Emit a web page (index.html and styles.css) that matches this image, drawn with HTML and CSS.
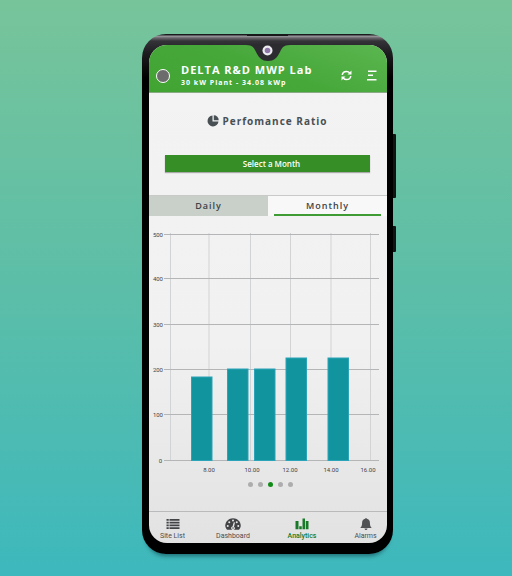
FILE: index.html
```html
<!DOCTYPE html>
<html lang="en">
<head>
<meta charset="utf-8">
<meta name="viewport" content="width=device-width, initial-scale=1">
<title>Analytics</title>
<link rel="stylesheet" href="styles.css">
</head>
<body>
<main class="stage">
  <div class="phone">
    <span class="speaker"></span>
    <span class="side-key volume"></span>
    <span class="side-key power"></span>
    <svg class="notch" viewBox="0 0 44 18" aria-hidden="true">
      <path d="M0 0H44V1C37 1 36 4 34 8C31 14 28 17 22 17S13 14 10 8C8 4 7 1 0 1Z" fill="#2c2b2f"/>
      <circle cx="21.500" cy="6.500" r="5" fill="#ececf0"/>
      <circle cx="21.500" cy="6.500" r="2.800" fill="#8f76a8"/>
    </svg>
    <div class="screen">
      <header class="topbar">
        <span class="status"></span>
        <div class="plant">
          <h1 class="plant-name">DELTA R&amp;D MWP Lab</h1>
          <p class="plant-size">30 kW Plant - 34.08 kWp</p>
        </div>
        <button class="icon-button" type="button" aria-label="Refresh">
          <svg width="11" height="11" viewBox="0 0 22 22" fill="none" stroke="#fff" stroke-width="3">
            <path d="M2.500 10C3 5.500 6.500 2.800 11 2.800C13.800 2.800 16 4 17.500 6"/>
            <path d="M19.500 12C19 16.500 15.500 19.200 11 19.200C8.200 19.200 6 18 4.500 16"/>
            <path d="M21 1V9H13ZM1 21V13H9Z" fill="#fff" stroke="none"/>
          </svg>
        </button>
        <button class="icon-button" type="button" aria-label="Menu">
          <svg width="10" height="11" viewBox="0 0 10 11" fill="#fff">
            <path d="M1 0.500H9.500V2H1ZM1 4.500H6V6H1ZM0 9H9.500V10.500H0Z"/>
          </svg>
        </button>
      </header>

      <section class="intro">
        <h2 class="heading">
          <svg width="12" height="12" viewBox="0 0 24 24" fill="#485054" aria-hidden="true">
            <path d="M11 1V13H23A11 11 0 1 1 11 1Z"/>
            <path d="M13.500 0.500A10 10 0 0 1 23.500 10.500H13.500Z"/>
          </svg>
          Perfomance Ratio
        </h2>
        <button class="select-month" type="button">Select a Month</button>
      </section>

      <div class="tabs" role="tablist">
        <button class="tab" type="button" role="tab" aria-selected="false">Daily</button>
        <button class="tab tab-active" type="button" role="tab" aria-selected="true"><span class="tab-label">Monthly</span></button>
      </div>

      <svg class="chart" viewBox="0 0 238 252" role="img" aria-label="Performance ratio by month">
        <g class="columns">
          <path d="M21.500 8V235M60 8V235M101.500 8V235M141.500 8V235M182 8V235M221.500 8V235"/>
        </g>
        <g class="rows">
          <path d="M15 9.500H230M15 53.500H230M15 99.500H230M15 144.500H230M15 189.500H230M15 235.500H230"/>
        </g>
        <g class="bars">
          <rect x="42.500" y="152" width="20.500" height="83.500"/>
          <rect x="78.500" y="144" width="20.500" height="91.500"/>
          <rect x="105.500" y="144" width="20.500" height="91.500"/>
          <rect x="137" y="133" width="20.500" height="102.500"/>
          <rect x="179" y="133" width="20.500" height="102.500"/>
        </g>
        <g class="values">
          <text x="14" y="12">500</text>
          <text x="14" y="56">400</text>
          <text x="14" y="102">300</text>
          <text x="14" y="147">200</text>
          <text x="14" y="192">100</text>
          <text x="13" y="238">0</text>
        </g>
        <g class="hours">
          <text x="60" y="247">8.00</text>
          <text x="103" y="247">10.00</text>
          <text x="141" y="247">12.00</text>
          <text x="182" y="247">14.00</text>
          <text x="219" y="247">16.00</text>
        </g>
      </svg>

      <div class="dots">
        <span class="dot"></span><span class="dot"></span><span class="dot dot-active"></span><span class="dot"></span><span class="dot"></span>
      </div>

      <nav class="bottom-nav">
        <a class="nav-item" href="#sites">
          <svg width="14" height="12" viewBox="0 0 28 24" fill="#414345" aria-hidden="true">
            <path d="M1 2H5.500V5.500H1ZM7 2H27V5.500H7ZM1 7.500H5.500V11H1ZM7 7.500H27V11H7ZM1 13H5.500V16.500H1ZM7 13H27V16.500H7ZM1 18.500H5.500V22H1ZM7 18.500H27V22H7Z"/>
          </svg>
          Site List
        </a>
        <a class="nav-item" href="#dashboard">
          <svg width="16" height="12" viewBox="0 0 32 24" aria-hidden="true">
            <path d="M4 23.500C2 21 0.500 18.500 0.500 15.500C0.500 7 7.500 0.500 16 0.500S31.500 7 31.500 15.500C31.500 18.500 30 21 28 23.500Z" fill="#414345"/>
            <g fill="#e6e6e6">
              <circle cx="5.500" cy="16" r="2"/><circle cx="8.500" cy="8.500" r="2"/><circle cx="16" cy="5" r="2"/><circle cx="23.500" cy="8.500" r="2"/><circle cx="26.500" cy="16" r="2"/>
              <path d="M17.500 8.500L20 9L18 17.500A3.500 3.500 0 1 1 15 17Z"/>
            </g>
            <circle cx="16" cy="20" r="1.500" fill="#414345"/>
          </svg>
          Dashboard
        </a>
        <a class="nav-item nav-active" href="#analytics" aria-current="page">
          <svg width="14" height="12" viewBox="0 0 28 24" fill="#187a28" aria-hidden="true">
            <path d="M1 6H7V22.500H1ZM8.500 16.500H13.500V22.500H8.500ZM15 1H20V22.500H15ZM21.500 6H27V22.500H21.500Z"/>
          </svg>
          Analytics
        </a>
        <a class="nav-item nav-last" href="#alarms">
          <svg width="12" height="12" viewBox="0 0 24 24" fill="#505254" aria-hidden="true">
            <path d="M12 0C13 0 13.500 0.700 13.500 1.700C18 2.500 19.800 6 19.800 9.500C19.800 15 21 17.500 23.500 20H0.500C3 17.500 4.200 15 4.200 9.500C4.200 6 6 2.500 10.500 1.700C10.500 0.700 11 0 12 0ZM9 21H15C15 22.800 13.600 24 12 24S9 22.800 9 21Z"/>
          </svg>
          Alarms
        </a>
      </nav>
    </div>
  </div>
</main>
</body>
</html>
```
FILE: styles.css
```css
* {
  box-sizing: border-box;
}

body {
  margin: 0;
  min-height: 100vh;
  background: linear-gradient(#77c49a, #5cbea8 50%, #3db8bd);
  font-family: "Open Sans", "Noto Sans", sans-serif;
  color: #3c4246;
}

button {
  border: 0;
  padding: 0;
  background: none;
  font-family: inherit;
  cursor: pointer;
}

h1,
h2,
p {
  margin: 0;
}

.stage {
  display: flex;
  justify-content: center;
  padding: 34px 0 20px 23px;
}

/* Handset */
.phone {
  position: relative;
  width: 49vw;
  min-width: 251px;
  max-width: 420px;
  padding: 11px 6px 11px 7px;
  border-radius: 24px;
  background: linear-gradient(#1a1a1c 1px, #a09ea3 2px, #67656a 4px, #343338 7px, #1c1b1e 20px, #000 44px);
  box-shadow: 0 6px 4px -4px rgba(10, 60, 70, 0.6);
}

.speaker {
  position: absolute;
  top: 0;
  left: 42%;
  width: 16%;
  height: 2px;
  background: #18181a;
}

.side-key {
  position: absolute;
  left: 100%;
  width: 3px;
  border-radius: 0 1px 1px 0;
  background: #101413;
}

.volume {
  top: 100px;
  height: 64px;
}

.power {
  top: 192px;
  height: 26px;
}

.notch {
  position: absolute;
  z-index: 1;
  top: 10px;
  left: 50%;
  width: 44px;
  height: 18px;
  margin-left: -22px;
}

.screen {
  overflow: hidden;
  border-radius: 18px;
  background: linear-gradient(#f3f3f4, #f1f1f2 60%, #e2e2e3);
}

/* Header */
.topbar {
  display: flex;
  align-items: center;
  gap: 11px;
  padding: 17px 10px 3px 7px;
  border-bottom: 1px solid #8aa985;
  background: linear-gradient(20deg, #41a432, #47a83a 50%, #5bb650);
}

.status {
  width: 14px;
  height: 14px;
  border: 1px solid #fff;
  border-radius: 50%;
  background: #6c6c6c;
}

.plant {
  flex: 1;
  color: #fff;
  font-weight: 700;
  letter-spacing: 1px;
  white-space: nowrap;
}

.plant-name {
  font-size: 11px;
  line-height: 15px;
}

.plant-size {
  font-size: 7px;
  line-height: 12px;
}

.icon-button {
  display: flex;
}

.icon-button + .icon-button {
  margin-left: 4px;
}

/* Title and month picker */
.intro {
  padding: 20px 17px 23px 16px;
}

.heading {
  display: flex;
  align-items: center;
  justify-content: center;
  gap: 3px;
  font-size: 10px;
  line-height: 16px;
  letter-spacing: 1px;
  color: #485054;
}

.select-month {
  display: block;
  width: 100%;
  margin-top: 26px;
  padding-left: 8px;
  background: #358f26;
  box-shadow: 0 1px 1px rgba(0, 0, 0, 0.3);
  color: #fff;
  font-size: 8px;
  font-weight: 600;
  line-height: 17px;
}

/* Tabs */
.tabs {
  display: grid;
  grid-template-columns: 1fr 1fr;
  border-top: 1px solid #c8cac8;
}

.tab {
  background: #c9cfc9;
  color: #3c4246;
  font-size: 9px;
  font-weight: 600;
  line-height: 20px;
  letter-spacing: 1px;
}

.tab-active {
  padding: 0 6px;
  background: #f8f8f8;
}

.tab-label {
  display: block;
  box-shadow: inset 0 -2px #3f9c35;
}

/* Chart */
.chart {
  display: block;
  width: 100%;
  margin-top: 9px;
  font-family: Roboto, sans-serif;
  font-size: 6px;
  fill: #3f4245;
}

.columns {
  stroke: #d2d3d4;
}

.rows {
  stroke: #b4b5b6;
}

.bars {
  fill: #12949e;
  stroke: #2ba3b8;
  stroke-width: 1px;
}

.values {
  text-anchor: end;
}

.hours {
  text-anchor: middle;
}

.dots {
  display: flex;
  justify-content: center;
  gap: 5px;
  margin: 5px 0 24px 4px;
}

.dot {
  width: 5px;
  height: 5px;
  border-radius: 50%;
  background: #adadae;
}

.dot-active {
  background: #128a18;
}

/* Bottom navigation */
.bottom-nav {
  display: grid;
  grid-template-columns: 47fr 74fr 64fr 53fr;
  padding: 6px 0 2px;
  border-top: 1px solid #b9babb;
}

.nav-item {
  display: flex;
  flex-direction: column;
  align-items: center;
  gap: 1px;
  color: #4b4d4f;
  font-family: Roboto, sans-serif;
  font-size: 7px;
  line-height: 10px;
  text-decoration: none;
  white-space: nowrap;
}

.nav-active {
  color: #187a28;
  font-weight: 500;
}

.nav-last {
  padding-left: 10px;
}
```
